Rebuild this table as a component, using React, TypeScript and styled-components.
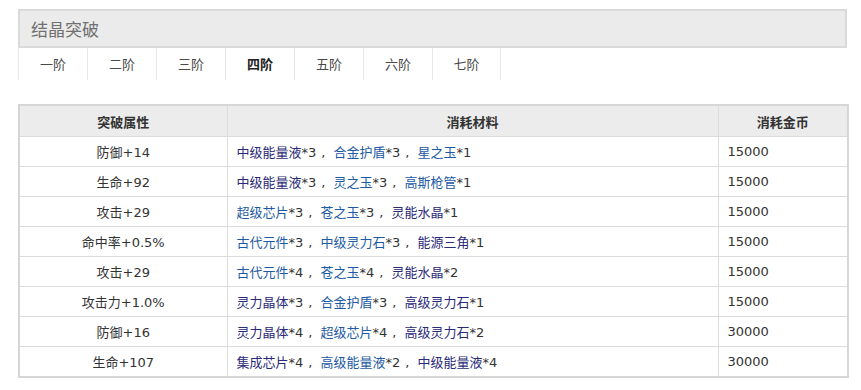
import React from "react";
import styled, { createGlobalStyle } from "styled-components";

const Global = createGlobalStyle`
  body {
    margin: 0;
    background: #fff;
    font-family: "DejaVu Sans", "Noto Sans CJK SC", sans-serif;
    color: #333;
  }
`;

const Page = styled.div`
  padding: 9px 0 0 18px;
  width: 829px;
`;

const TitleBar = styled.div`
  box-sizing: border-box;
  height: 39px;
  border: 2px solid #dadada;
  background: #ebebeb;
  display: flex;
  align-items: center;
  padding-left: 11px;
  font-family: "Noto Sans CJK SC", sans-serif;
  font-size: 17px;
  color: #707070;
`;

const Tabs = styled.div`
  display: flex;
  height: 32px;
  font-family: "Noto Sans CJK SC", sans-serif;
`;

const Tab = styled.div<{ $active?: boolean; $last?: boolean }>`
  box-sizing: border-box;
  width: 69px;
  display: flex;
  align-items: center;
  justify-content: center;
  padding-bottom: 2px;
  font-size: 13px;
  color: ${(p) => (p.$active ? "#222" : "#4a4a4a")};
  font-weight: ${(p) => (p.$active ? 700 : 400)};
  border-left: 1px solid #e8e8e8;
  border-right: ${(p) => (p.$last ? "1px solid #e8e8e8" : "none")};
`;

const Table = styled.table`
  margin-top: 24px;
  width: 829px;
  border-collapse: collapse;
  border: 2px solid #d6d6d6;
  font-size: 13px;
  table-layout: fixed;
`;

const Th = styled.th`
  height: 30px;
  background: #ececec;
  font-family: "Noto Sans CJK SC", sans-serif;
  font-weight: 700;
  color: #333;
  border: 1px solid #dcdcdc;
  text-align: center;
  padding: 0;
`;

const Td = styled.td<{ $align?: "center" | "left" }>`
  height: 29px;
  border: 1px solid #dcdcdc;
  text-align: ${(p) => p.$align ?? "left"};
  padding: 0 ${(p) => (p.$align === "center" ? "0" : "9px")};
  color: #333;
  white-space: nowrap;
`;

const Item = styled.a<{ $visited?: boolean }>`
  color: ${(p) => (p.$visited ? "#2a2a78" : "#1d5aa3")};
  text-decoration: none;
`;

const Sep = styled.span`
  margin: 0 8px 0 5px;
  color: #333;
`;

type Mat = [string, number, boolean?];
type Row = { attr: string; mats: Mat[]; gold: string };

const rows: Row[] = [
  { attr: "防御+14", mats: [["中级能量液", 3, true], ["合金护盾", 3], ["星之玉", 1]], gold: "15000" },
  { attr: "生命+92", mats: [["中级能量液", 3, true], ["灵之玉", 3], ["高斯枪管", 1]], gold: "15000" },
  { attr: "攻击+29", mats: [["超级芯片", 3], ["苍之玉", 3], ["灵能水晶", 1, true]], gold: "15000" },
  { attr: "命中率+0.5%", mats: [["古代元件", 3], ["中级灵力石", 3], ["能源三角", 1, true]], gold: "15000" },
  { attr: "攻击+29", mats: [["古代元件", 4], ["苍之玉", 4], ["灵能水晶", 2, true]], gold: "15000" },
  { attr: "攻击力+1.0%", mats: [["灵力晶体", 3, true], ["合金护盾", 3], ["高级灵力石", 1, true]], gold: "15000" },
  { attr: "防御+16", mats: [["灵力晶体", 4, true], ["超级芯片", 4], ["高级灵力石", 2, true]], gold: "30000" },
  { attr: "生命+107", mats: [["集成芯片", 4, true], ["高级能量液", 2], ["中级能量液", 4, true]], gold: "30000" },
];

const tabs = ["一阶", "二阶", "三阶", "四阶", "五阶", "六阶", "七阶"];

export default function App() {
  return (
    <Page>
      <Global />
      <TitleBar>结晶突破</TitleBar>
      <Tabs>
        {tabs.map((t, i) => (
          <Tab key={t} $active={i === 3} $last={i === tabs.length - 1}>
            {t}
          </Tab>
        ))}
      </Tabs>
      <Table>
        <colgroup>
          <col style={{ width: 208 }} />
          <col style={{ width: 491 }} />
          <col style={{ width: 130 }} />
        </colgroup>
        <thead>
          <tr>
            <Th>突破属性</Th>
            <Th>消耗材料</Th>
            <Th>消耗金币</Th>
          </tr>
        </thead>
        <tbody>
          {rows.map((r, i) => (
            <tr key={i}>
              <Td $align="center">{r.attr}</Td>
              <Td>
                {r.mats.map(([name, n, v], j) => (
                  <React.Fragment key={j}>
                    <Item $visited={!!v}>{name}</Item>*{n}
                    {j < r.mats.length - 1 ? <Sep>,</Sep> : null}
                  </React.Fragment>
                ))}
              </Td>
              <Td>{r.gold}</Td>
            </tr>
          ))}
        </tbody>
      </Table>
    </Page>
  );
}
